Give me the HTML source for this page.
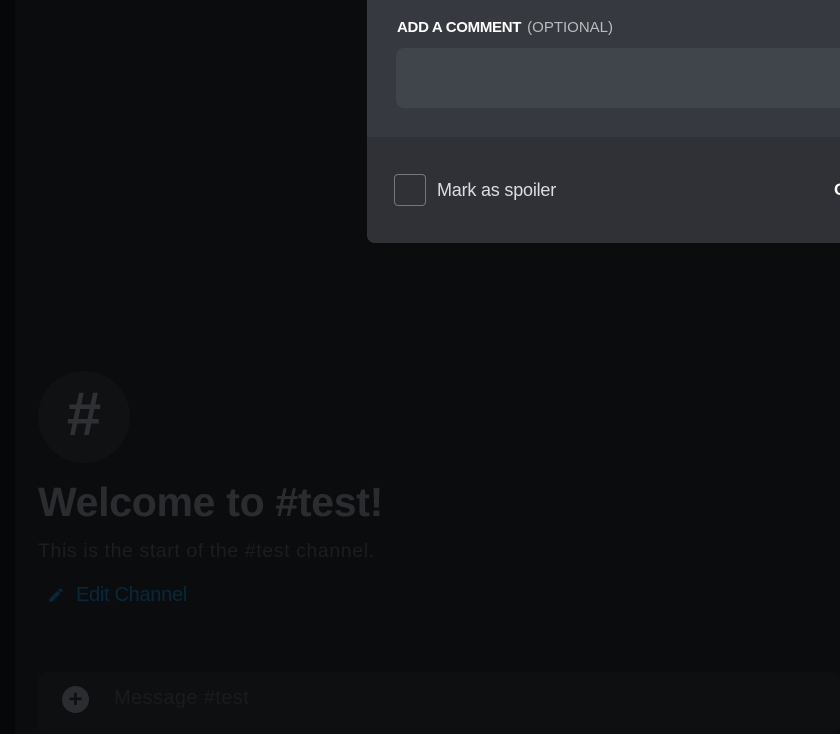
<!DOCTYPE html>
<html><head><style>
*{margin:0;padding:0;box-sizing:border-box}
body{width:840px;height:734px;overflow:hidden;background:#0b0c0e;font-family:"Liberation Sans",sans-serif;position:relative}
.strip{position:absolute;left:0;top:0;width:15px;height:734px;background:#060708}
.modal{position:absolute;left:367px;top:-10px;width:490px;height:253px;border-radius:8px;overflow:hidden;background:#36393f}
.foot{position:absolute;left:0;top:147px;width:100%;height:106px;background:#2f3136}
.lbl{position:absolute;left:30px;top:29px;font-size:15px;font-weight:bold;color:#fff;letter-spacing:-0.3px}
.lbl span{font-weight:normal;color:#b9bbbe;margin-left:6px;font-size:15px;letter-spacing:0px}
.inp{position:absolute;left:29px;top:58px;width:480px;height:60px;border-radius:8px;background:#40444b}
.cb{position:absolute;left:27px;top:184px;width:32px;height:32px;border:1px solid #72767d;border-radius:4px}
.sp{position:absolute;left:70px;top:190px;font-size:18px;color:#dcddde;letter-spacing:-0.2px}
.c{position:absolute;left:467px;top:190px;font-size:17px;color:#fff;font-weight:bold}
.av{position:absolute;left:38px;top:371px;width:92px;height:92px;border-radius:50%;background:#101113;color:#2e3033;font-size:62px;font-weight:bold;text-align:center;line-height:88px}
.h{position:absolute;left:38px;top:479px;font-size:41px;font-weight:900;color:#2b2c2f;letter-spacing:-0.3px}
.s{position:absolute;left:38px;top:540px;font-size:19.5px;color:#1c1d20;letter-spacing:0.6px}
.e{position:absolute;left:76px;top:584px;font-size:20px;color:#06293a;letter-spacing:-0.3px}
.msg{position:absolute;left:38px;top:672px;width:802px;height:62px;background:#0e0f11;border-radius:8px}
.plus{position:absolute;left:62px;top:686px;width:27px;height:27px;border-radius:50%;background:#2a2c30;color:#0e0f11;font-size:24px;font-weight:bold;text-align:center;line-height:27px}
.mp{position:absolute;left:114px;top:687px;font-size:20px;color:#1a1b1e;letter-spacing:0.4px}
</style></head><body>
<div class="strip"></div>
<div class="modal">
<div class="lbl">ADD A COMMENT<span>(OPTIONAL)</span></div>
<div class="inp"></div>
<div class="foot"></div>
<div class="cb"></div>
<div class="sp">Mark as spoiler</div>
<div class="c">C</div>
</div>
<div class="av">#</div>
<div class="h">Welcome to #test!</div>
<div class="s">This is the start of the #test channel.</div>
<svg style="position:absolute;left:47px;top:586px" width="18" height="18" viewBox="0 0 24 24"><path d="M3 17.25V21h3.75L17.8 9.94l-3.75-3.75L3 17.25zM20.7 7.04a1 1 0 000-1.41l-2.34-2.34a1 1 0 00-1.41 0l-1.83 1.83 3.75 3.75 1.83-1.83z" fill="#06293a"/></svg>
<div class="e">Edit Channel</div>
<div class="msg"></div>
<div class="plus">+</div>
<div class="mp">Message #test</div>
</body></html>
